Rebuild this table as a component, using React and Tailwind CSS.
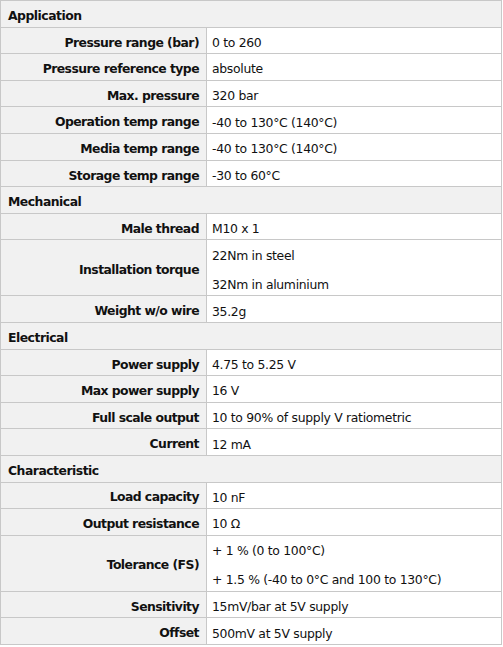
import React from "react";

const sections = [
  {
    title: "Application",
    rows: [
      ["Pressure range (bar)", ["0 to 260"]],
      ["Pressure reference type", ["absolute"]],
      ["Max. pressure", ["320 bar"]],
      ["Operation temp range", ["-40 to 130°C (140°C)"]],
      ["Media temp range", ["-40 to 130°C (140°C)"]],
      ["Storage temp range", ["-30 to 60°C"]],
    ],
  },
  {
    title: "Mechanical",
    rows: [
      ["Male thread", ["M10 x 1"]],
      ["Installation torque", ["22Nm in steel", "32Nm in aluminium"]],
      ["Weight w/o wire", ["35.2g"]],
    ],
  },
  {
    title: "Electrical",
    rows: [
      ["Power supply", ["4.75 to 5.25 V"]],
      ["Max power supply", ["16 V"]],
      ["Full scale output", ["10 to 90% of supply V ratiometric"]],
      ["Current", ["12 mA"]],
    ],
  },
  {
    title: "Characteristic",
    rows: [
      ["Load capacity", ["10 nF"]],
      ["Output resistance", ["10 Ω"]],
      ["Tolerance (FS)", ["+ 1 % (0 to 100°C)", "+ 1.5 % (-40 to 0°C and 100 to 130°C)"]],
      ["Sensitivity", ["15mV/bar at 5V supply"]],
      ["Offset", ["500mV at 5V supply"]],
    ],
  },
];

export default function App() {
  return (
    <div className="bg-white w-[503px] h-[647px]">
      <div
        className="w-[502px] border-l border-t border-[#c8c8c8] text-[12.4px] text-[#111]"
        style={{ fontFamily: '"DejaVu Sans", Verdana, sans-serif' }}
      >
        {sections.map((s) => (
          <div key={s.title}>
            <div className="h-[26.6px] flex items-center bg-[#f1f1f1] border-b border-r border-[#c8c8c8] pl-[7px] pt-[5px] font-bold tracking-[-0.5px]">
              {s.title}
            </div>
            {s.rows.map(([label, vals]) => (
              <div
                key={label}
                className={`flex border-b border-r border-[#c8c8c8] ${vals.length > 1 ? "h-[56px]" : "h-[26.6px]"}`}
              >
                <div className="w-[206px] shrink-0 bg-[#f1f1f1] border-r border-[#c8c8c8] flex items-center justify-end pr-[7px] pt-[5px] font-bold tracking-[-0.55px]">
                  {label}
                </div>
                <div className="flex-1 bg-white flex flex-col justify-center gap-[13px] pl-[5px] pt-[5px] tracking-[-0.3px]">
                  {vals.map((v) => (
                    <div key={v} className="leading-[16px]">{v}</div>
                  ))}
                </div>
              </div>
            ))}
          </div>
        ))}
      </div>
    </div>
  );
}
